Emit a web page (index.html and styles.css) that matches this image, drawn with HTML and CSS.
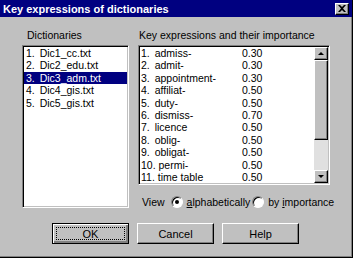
FILE: index.html
```html
<!DOCTYPE html>
<html lang="en">
<head>
  <meta charset="UTF-8">
  <title>Key expressions of dictionaries</title>
  <link rel="stylesheet" href="styles.css">
</head>
<body>
  <div class="dialog">
    <div class="titleBar">
      <span class="titleText">Key expressions of dictionaries</span>
      <span class="closeButton">
        <svg width="8" height="7" viewBox="0 0 8 7">
          <path d="M0 0h2l2 2 2-2h2L5 3.5 8 7H6L4 5 2 7H0l3-3.5z" fill="#000"/>
        </svg>
      </span>
    </div>

    <div class="panes">
      <div class="pane dictPane">
        <div class="label">Dictionaries</div>
        <div class="listBox dictList">
          <div class="row"><span class="num">1. </span>Dic1_cc.txt</div>
          <div class="row"><span class="num">2. </span>Dic2_edu.txt</div>
          <div class="row selected"><span class="num">3. </span>Dic3_adm.txt</div>
          <div class="row"><span class="num">4. </span>Dic4_gis.txt</div>
          <div class="row"><span class="num">5. </span>Dic5_gis.txt</div>
        </div>
      </div>

      <div class="pane keyPane">
        <div class="label">Key expressions and their importance</div>
        <div class="listBox keyList">
          <div class="keyRows" id="keyRows">
            <!-- rows filled by the script below -->
          </div>
          <div class="scrollBar">
            <div class="scrollButton"><span class="arrowUp"></span></div>
            <div class="scrollThumb"></div>
            <div class="scrollTrack"></div>
            <div class="scrollButton"><span class="arrowDown"></span></div>
          </div>
        </div>
        <div class="viewRow">
          <span class="viewLabel">View</span>
          <span class="radio checked"></span>
          <span class="radioText"><u>a</u>lphabetically</span>
          <span class="radio"></span>
          <span class="radioText">by <u>i</u>mportance</span>
        </div>
      </div>
    </div>

    <div class="buttonRow">
      <div class="button defaultButton"><span class="focusRing">OK</span></div>
      <div class="button">Cancel</div>
      <div class="button">Help</div>
    </div>
  </div>

  <script>
    // key expressions of the selected dictionary
    const keys = [
      ['admiss-', '0.30'],
      ['admit-', '0.30'],
      ['appointment-', '0.30'],
      ['affiliat-', '0.50'],
      ['duty-', '0.50'],
      ['dismiss-', '0.70'],
      ['licence', '0.50'],
      ['oblig-', '0.50'],
      ['obligat-', '0.50'],
      ['permi-', '0.50'],
      ['time table', '0.50']
    ];

    const rows = keys.map((key, i) => {
      const gap = i < 9 ? 'num' : 'num wide';
      return `
        <div class="row keyRow">
          <span class="keyName"><span class="${gap}">${i + 1}. </span>${key[0]}</span>
          <span class="keyValue">${key[1]}</span>
        </div>
      `;
    }).join('');

    document.getElementById('keyRows').innerHTML = rows;
  </script>
</body>
</html>
```

FILE: styles.css
```css
html, body {
  margin: 0;
  padding: 0;
  background-color: #c0c0c0;
}

.dialog {
  width: 353px;
  height: 258px;
  box-sizing: border-box;
  background-color: #c0c0c0;
  border-right: 1px solid #000000;
  border-bottom: 1px solid #000000;
  box-shadow: inset -1px -1px 0 #808080;
  font-family: 'Liberation Sans', Arial, sans-serif;
  font-size: 10.5px;
  color: #000000;
  overflow: hidden;
}

.titleBar {
  height: 17px;
  background-color: #000080;
  color: #ffffff;
  display: flex;
  align-items: center;
  justify-content: space-between;
  padding: 0 3px 0 3px;
}

.titleText {
  font-weight: 700;
  font-size: 11px;
}

.closeButton {
  width: 14px;
  height: 12px;
  box-sizing: border-box;
  background-color: #c0c0c0;
  border-top: 1px solid #ffffff;
  border-left: 1px solid #ffffff;
  border-right: 1px solid #000000;
  border-bottom: 1px solid #000000;
  box-shadow: inset -1px -1px 0 #808080;
  display: flex;
  align-items: center;
  justify-content: center;
}

.panes {
  display: flex;
  gap: 9px;
  padding: 11px 0 0 22px;
}

.label {
  line-height: 14px;
  margin-bottom: 3px;
  padding-left: 5px;
  white-space: nowrap;
}

.keyPane .label {
  padding-left: 1px;
}

.listBox {
  box-sizing: border-box;
  background-color: #ffffff;
  border-top: 1px solid #808080;
  border-left: 1px solid #808080;
  border-right: 1px solid #ffffff;
  border-bottom: 1px solid #ffffff;
  box-shadow: inset 1px 1px 0 #000000, inset -1px -1px 0 #c0c0c0;
  padding: 1px;
}

.dictList {
  width: 107px;
  height: 163px;
}

.keyList {
  width: 192px;
  height: 140px;
  display: flex;
}

.row {
  height: 12.4px;
  line-height: 12.4px;
  padding-left: 2px;
  white-space: pre;
}

.keyRow {
  display: flex;
  padding-left: 1px;
}

.num {
  margin-right: 2px;
}

.num.wide {
  margin-right: 0;
}

.selected {
  background-color: #000080;
  color: #ffffff;
}

.keyRows {
  flex: 1;
}

.keyName {
  width: 101px;
  white-space: pre;
}

.scrollBar {
  width: 14px;
  display: flex;
  flex-direction: column;
  background-color: #c0c0c0;
}

.scrollButton,
.scrollThumb {
  box-sizing: border-box;
  background-color: #c0c0c0;
  border-top: 1px solid #ffffff;
  border-left: 1px solid #ffffff;
  border-right: 1px solid #000000;
  border-bottom: 1px solid #000000;
  box-shadow: inset -1px -1px 0 #808080;
}

.scrollButton {
  height: 13px;
  display: flex;
  align-items: center;
  justify-content: center;
}

.scrollThumb {
  height: 80px;
}

.scrollTrack {
  flex: 1;
  background-color: #e0e0e0;
}

.arrowUp,
.arrowDown {
  width: 0;
  height: 0;
  border-left: 3px solid transparent;
  border-right: 3px solid transparent;
}

.arrowUp {
  border-bottom: 3px solid #000000;
}

.arrowDown {
  border-top: 3px solid #000000;
}

.viewRow {
  display: flex;
  align-items: center;
  height: 14px;
  margin-top: 10px;
  padding-left: 4px;
  white-space: nowrap;
}

.viewLabel {
  margin-right: 6px;
}

.radio {
  width: 12px;
  height: 12px;
  box-sizing: border-box;
  border-radius: 50%;
  background-color: #ffffff;
  border-top: 1px solid #808080;
  border-left: 1px solid #808080;
  border-right: 1px solid #ffffff;
  border-bottom: 1px solid #ffffff;
  box-shadow: inset 1px 1px 0 #000000;
  display: flex;
  align-items: center;
  justify-content: center;
  margin-right: 4px;
}

.radio.checked::after {
  content: '';
  width: 4px;
  height: 4px;
  border-radius: 50%;
  background-color: #000000;
}

.radioText {
  margin-right: 2px;
}

.buttonRow {
  display: flex;
  gap: 8px;
  padding-left: 52px;
  margin-top: 14px;
}

.button {
  width: 77px;
  height: 21px;
  box-sizing: border-box;
  border-top: 1px solid #ffffff;
  border-left: 1px solid #ffffff;
  border-right: 1px solid #000000;
  border-bottom: 1px solid #000000;
  box-shadow: inset -1px -1px 0 #808080;
  display: flex;
  align-items: center;
  justify-content: center;
  font-size: 11px;
}

.defaultButton {
  border: 1px solid #000000;
  box-shadow: inset 1px 1px 0 #ffffff, inset -2px -2px 0 #808080;
  padding: 3px;
}

.focusRing {
  flex: 1;
  align-self: stretch;
  display: flex;
  align-items: center;
  justify-content: center;
  border: 1px dotted #000000;
}
```
